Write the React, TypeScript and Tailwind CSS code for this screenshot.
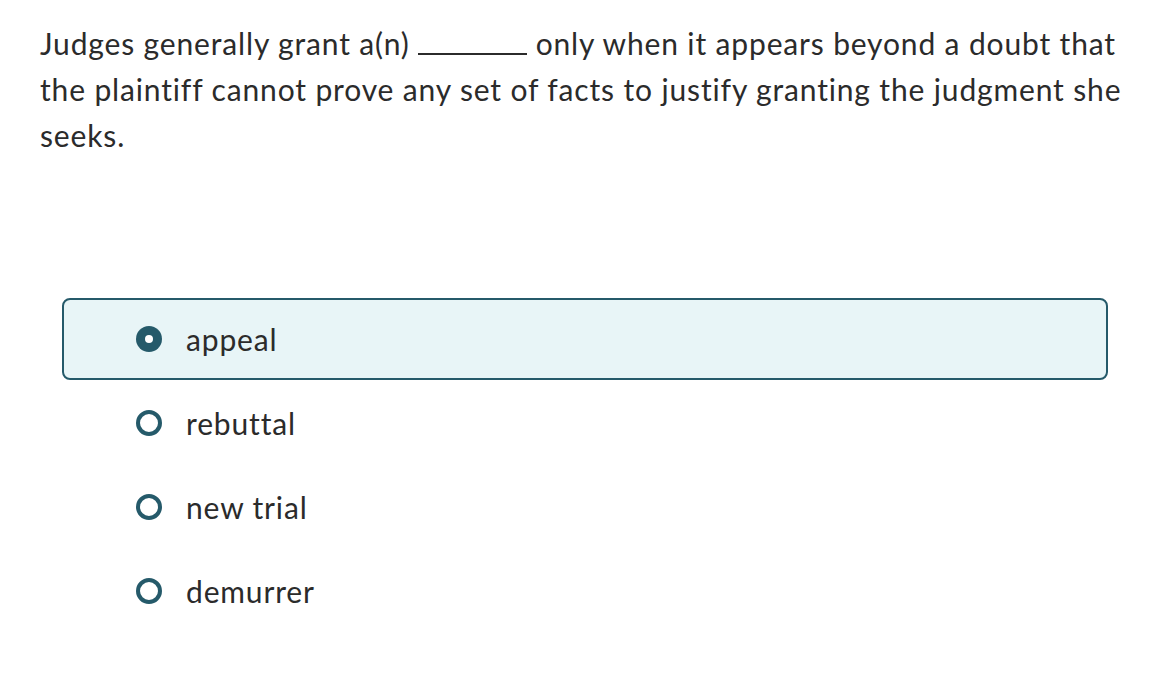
import { useState } from 'react';

const options = ['appeal', 'rebuttal', 'new trial', 'demurrer'];

export default function App() {
  const [selected, setSelected] = useState(0);

  return (
    <div className="min-h-screen bg-white pl-[40px] pr-[24px] pt-[20px] text-[#2b2b2b] [font-family:Lato,'Open_Sans',sans-serif]">
      <p className="text-[30px] leading-[46px] tracking-[0.85px]">
        Judges generally grant a(n){' '}
        <span className="inline-block w-[109px] border-b-2 border-[#2b2b2b] align-baseline"></span>{' '}
        only when it appears beyond a doubt that the plaintiff cannot prove any set of facts to justify granting the
        judgment she seeks.
      </p>

      <div className="mt-[140px] ml-[22px] mr-[32px] flex flex-col gap-[2px]">
        {options.map((opt, i) => {
          const isSel = selected === i;
          return (
            <button
              key={opt}
              onClick={() => setSelected(i)}
              className={`flex h-[82px] items-center gap-[24px] rounded-[8px] border-2 pl-[72px] text-left ${
                isSel ? 'border-[#255a6a] bg-[#e8f5f7]' : 'border-transparent bg-white'
              }`}
            >
              {isSel ? (
                <span className="flex h-[26px] w-[26px] items-center justify-center rounded-full bg-[#255a6a]">
                  <span className="h-[8px] w-[8px] rounded-full bg-white"></span>
                </span>
              ) : (
                <span className="h-[26px] w-[26px] rounded-full border-[4px] border-[#255a6a]"></span>
              )}
              <span className="text-[30px] tracking-[0.85px] text-[#2b2b2b]">{opt}</span>
            </button>
          );
        })}
      </div>
    </div>
  );
}
